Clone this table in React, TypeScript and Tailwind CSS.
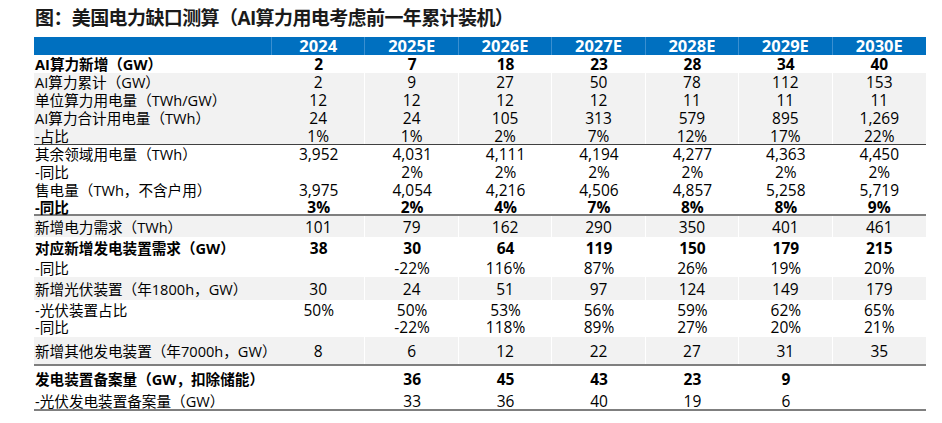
type Row = {
  label: string
  values: string[]
  bold?: boolean
  gray?: boolean
  h: string
  line?: 'thin' | 'thick'
  gapAfter?: boolean
}

const YEARS = ['2024', '2025E', '2026E', '2027E', '2028E', '2029E', '2030E']

const ROWS: Row[] = [
  { label: 'AI算力新增（GW）', values: ['2', '7', '18', '23', '28', '34', '40'], bold: true, h: 'h-[18px]' },
  { label: 'AI算力累计（GW）', values: ['2', '9', '27', '50', '78', '112', '153'], gray: true, h: 'h-[18px]' },
  { label: '单位算力用电量（TWh/GW）', values: ['12', '12', '12', '12', '11', '11', '11'], gray: true, h: 'h-[18px]' },
  { label: 'AI算力合计用电量（TWh）', values: ['24', '24', '105', '313', '579', '895', '1,269'], gray: true, h: 'h-[18px]' },
  { label: '-占比', values: ['1%', '1%', '2%', '7%', '12%', '17%', '22%'], gray: true, h: 'h-[18px]', line: 'thin' },
  { label: '其余领域用电量（TWh）', values: ['3,952', '4,031', '4,111', '4,194', '4,277', '4,363', '4,450'], h: 'h-[18px]' },
  { label: '-同比', values: ['', '2%', '2%', '2%', '2%', '2%', '2%'], h: 'h-[18px]' },
  { label: '售电量（TWh，不含户用）', values: ['3,975', '4,054', '4,216', '4,506', '4,857', '5,258', '5,719'], h: 'h-[18px]' },
  { label: '-同比', values: ['3%', '2%', '4%', '7%', '8%', '8%', '9%'], bold: true, h: 'h-[17px]', line: 'thick' },
  { label: '新增电力需求（TWh）', values: ['101', '79', '162', '290', '350', '401', '461'], gray: true, h: 'h-[21px]' },
  { label: '对应新增发电装置需求（GW）', values: ['38', '30', '64', '119', '150', '179', '215'], bold: true, h: 'h-[22px]' },
  { label: '-同比', values: ['', '-22%', '116%', '87%', '26%', '19%', '20%'], h: 'h-[18px]' },
  { label: '新增光伏装置（年1800h，GW）', values: ['30', '24', '51', '97', '124', '149', '179'], gray: true, h: 'h-[23px]' },
  { label: '-光伏装置占比', values: ['50%', '50%', '53%', '56%', '59%', '62%', '65%'], h: 'h-[19px]' },
  { label: '-同比', values: ['', '-22%', '118%', '89%', '27%', '20%', '21%'], h: 'h-[16px]', gapAfter: true },
  { label: '新增其他发电装置（年7000h，GW）', values: ['8', '6', '12', '22', '27', '31', '35'], gray: true, h: 'h-[29px]', line: 'thick' },
  { label: '发电装置备案量（GW，扣除储能）', values: ['', '36', '45', '43', '23', '9', ''], bold: true, h: 'h-[26px]' },
  { label: '-光伏发电装置备案量（GW）', values: ['', '33', '36', '40', '19', '6', ''], h: 'h-[19px]', line: 'thick' },
]

function TableRow({ row }: { row: Row }) {
  return (
    <>
      <div
        className={`grid grid-cols-[238px_repeat(7,1fr)] items-center ${row.h} ${
          row.gray ? 'bg-[#f2f2f2]' : 'bg-white'
        } ${row.bold ? 'font-bold' : 'font-normal'} ${
          row.line === 'thin'
            ? 'border-b border-[#404040]'
            : row.line === 'thick'
              ? 'border-b-2 border-[#7f7f7f]'
              : ''
        }`}
      >
        <div className="pl-px text-[14.6px] leading-[14px] whitespace-nowrap">{row.label}</div>
        {row.values.map((v, i) => (
          <div
            key={i}
            className={`h-full flex items-center justify-center text-[15.5px] leading-[14px] ${
              row.gray && i < 6 ? 'border-r border-white' : ''
            }`}
          >
            {v}
          </div>
        ))}
      </div>
      {row.gapAfter && <div className="h-[2px]" />}
    </>
  )
}

export default function App() {
  return (
    <div
      className="w-[942px] h-[423px] bg-white text-black overflow-hidden"
      style={{ fontFamily: '"Open Sans", "Noto Sans CJK SC", sans-serif' }}
    >
      <div className="pl-[35px] pt-[6px] h-[37px]">
        <h1 className="text-[19px] font-bold leading-[24px] tracking-[-0.6px] text-[#1a1a1a]">
          图：美国电力缺口测算（AI算力用电考虑前一年累计装机）
        </h1>
      </div>

      <div className="ml-[34px] w-[892px]">
        {/* Header */}
        <div className="grid grid-cols-[238px_repeat(7,1fr)] h-[18px] bg-[#0070c0] text-white font-bold text-[16.5px]">
          <div className="border-r border-[#3a8fd0]" />
          {YEARS.map((y, i) => (
            <div
              key={y}
              className={`flex items-center justify-center leading-[16px] ${i < 6 ? 'border-r border-[#3a8fd0]' : ''}`}
            >
              {y}
            </div>
          ))}
        </div>

        {ROWS.map((r, i) => (
          <TableRow key={i} row={r} />
        ))}
      </div>
    </div>
  )
}
